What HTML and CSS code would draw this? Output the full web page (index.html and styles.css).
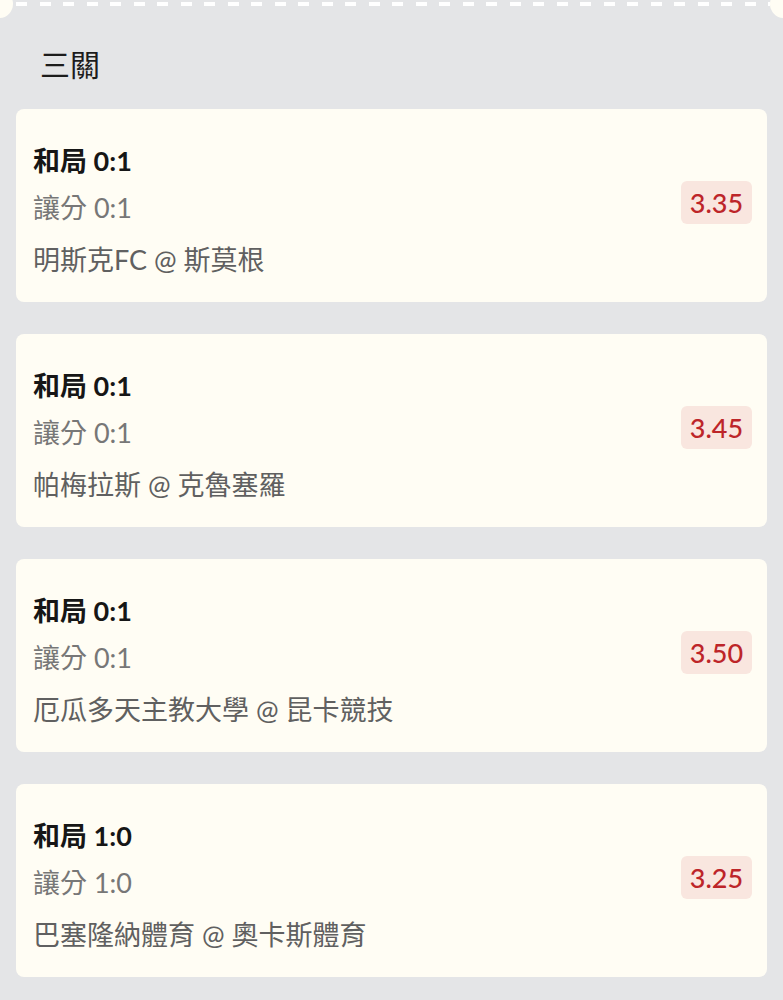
FILE: index.html
```html
<!DOCTYPE html>
<html>
<head lang="zh-Hant">
    <meta charset="UTF-8">
    <title>三關</title>
    <link rel="stylesheet" href="styles.css">
</head>
<body>
<div class="edge"></div>
<h2 class="title">三關</h2>
<ul class="bets">
    <li class="bet">
        <div class="info">
            <p class="pick">和局 0:1</p>
            <p class="market">讓分 0:1</p>
            <p class="match">明斯克FC @ 斯莫根</p>
        </div>
        <span class="odds">3.35</span>
    </li>
    <li class="bet">
        <div class="info">
            <p class="pick">和局 0:1</p>
            <p class="market">讓分 0:1</p>
            <p class="match">帕梅拉斯 @ 克魯塞羅</p>
        </div>
        <span class="odds">3.45</span>
    </li>
    <li class="bet">
        <div class="info">
            <p class="pick">和局 0:1</p>
            <p class="market">讓分 0:1</p>
            <p class="match">厄瓜多天主教大學 @ 昆卡競技</p>
        </div>
        <span class="odds">3.50</span>
    </li>
    <li class="bet">
        <div class="info">
            <p class="pick">和局 1:0</p>
            <p class="market">讓分 1:0</p>
            <p class="match">巴塞隆納體育 @ 奧卡斯體育</p>
        </div>
        <span class="odds">3.25</span>
    </li>
</ul>
</body>
</html>
```

FILE: styles.css
```css
*{
    margin: 0;
    padding: 0;
    list-style: none;
    box-sizing: border-box;
}
body{
    background-color: #e4e5e7;
    font-family: Lato, "Noto Sans CJK TC", sans-serif;
    overflow: hidden;
}
.edge{
    position: relative;
    height: 8px;
    margin: 0 13px;
    background: repeating-linear-gradient(to right, #fff 0, #fff 11px, transparent 11px, transparent 23.5px) 3px 2px / 100% 4px no-repeat;
}
.edge:before,.edge:after{
    content: "";
    position: absolute;
    top: -10px;
    width: 28px;
    height: 28px;
    border-radius: 50%;
    background-color: #fffdf4;
}
.edge:before{
    left: -28px;
}
.edge:after{
    right: -28px;
}
.title{
    margin: 38px 0 27px 40px;
    font-size: 30px;
    line-height: 36px;
    font-weight: normal;
    color: #1c1c1c;
}
.bets{
    display: flex;
    flex-direction: column;
    gap: 32px;
    padding: 0 16px;
}
.bet{
    display: flex;
    align-items: center;
    justify-content: space-between;
    height: 193px;
    padding: 34px 15px 24px 17px;
    background-color: #fffdf4;
    border-radius: 8px;
}
.info p{
    font-size: 27px;
    line-height: 36px;
    color: #777;
}
.info .pick{
    font-weight: bold;
    color: #161616;
}
.info .market{
    margin-top: 11px;
}
.info .match{
    margin-top: 16px;
    color: #606060;
}
.odds{
    display: block;
    width: 71px;
    height: 43px;
    margin-top: -16px;
    line-height: 43px;
    text-align: center;
    font-size: 27px;
    font-weight: 500;
    color: #bd2529;
    background-color: #f9e6df;
    border-radius: 6px;
}
```
